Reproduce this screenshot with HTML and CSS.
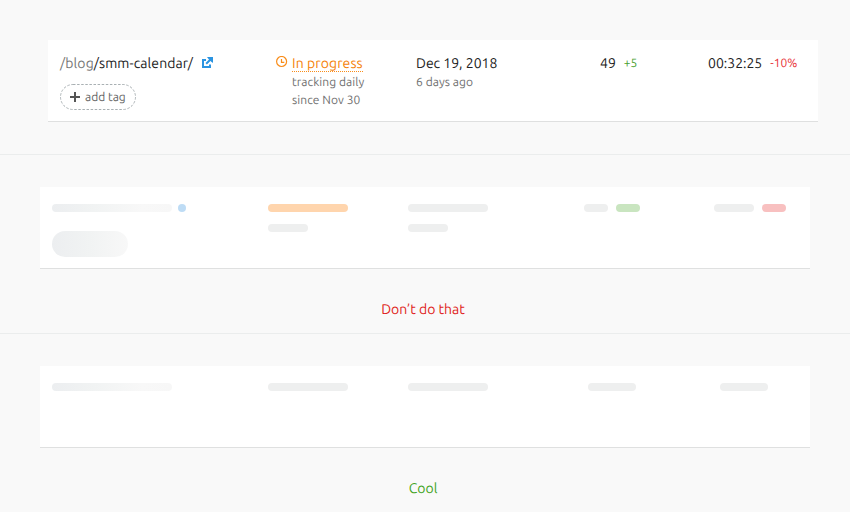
FILE: index.html
```html
<!DOCTYPE html>
<html lang="en">
<head>
<meta charset="utf-8">
<title>Row placeholders</title>
<link rel="stylesheet" href="styles.css">
</head>
<body>
<section class="example example-live">
  <div class="row">
    <div class="cell">
      <div class="line url"><span class="path"><span class="muted">/blog</span>/smm-calendar/</span>
        <svg class="external" width="11" height="11" viewBox="0 0 11 11" fill="none" stroke="#2b94e1" stroke-width="2"><path d="M4 3H1v7h7V7.5M4.2 6.8L9 2"/><path d="M5 0h6v6L9 4.5 6.5 2z" fill="#2b94e1" stroke="none"/></svg>
      </div>
      <div class="tag"><svg width="10" height="10" viewBox="0 0 10 10" stroke="#555" stroke-width="2"><path d="M0 5h10M5 0v10"/></svg><span class="tag-text">add tag</span>
        <svg class="tag-outline" width="76" height="26" viewBox="0 0 76 26" fill="none" stroke="#a9b0b3" stroke-dasharray="2.5 1.6"><rect x=".5" y=".5" width="75" height="25" rx="12.5"/></svg>
      </div>
    </div>
    <div class="cell status">
      <svg class="clock" width="12" height="12" viewBox="0 0 12 12" fill="none" stroke="#f98d1a" stroke-width="1.2"><circle cx="5.6" cy="5.5" r="5"/><path d="M5.5 3v3.4h2.8"/></svg>
      <div>
        <div class="line"><span class="progress">In progress</span></div>
        <div class="note">tracking daily</div>
        <div class="note">since Nov 30</div>
      </div>
    </div>
    <div class="cell"><div class="line">Dec 19, 2018</div><div class="note">6 days ago</div></div>
    <div class="cell line metric count"><span>49</span><span class="delta up">+5</span></div>
    <div class="cell line metric time"><span>00:32:25</span><span class="delta down">-10%</span></div>
  </div>
</section>
<section class="example">
  <div class="row skeleton">
    <div class="cell"><div class="bars gap-s"><i class="bar w120 fade"></i><i class="bar w8 blue"></i></div><i class="pill fade-pill"></i></div>
    <div class="cell stack"><i class="bar w80 orange"></i><i class="bar w40"></i></div>
    <div class="cell stack"><i class="bar w80"></i><i class="bar w40"></i></div>
    <div class="cell bars count-detailed"><i class="bar w24"></i><i class="bar w24 green"></i></div>
    <div class="cell bars time-detailed"><i class="bar w40"></i><i class="bar w24 red"></i></div>
  </div>
  <p class="caption bad">Don’t do that</p>
</section>
<section class="example">
  <div class="row skeleton">
    <div class="cell"><i class="bar w120 fade"></i></div>
    <div class="cell"><i class="bar w80"></i></div>
    <div class="cell"><i class="bar w80"></i></div>
    <div class="cell count-simple"><i class="bar w48"></i></div>
    <div class="cell time-simple"><i class="bar w48"></i></div>
  </div>
  <p class="caption good">Cool</p>
</section>
</body>
</html>
```
FILE: styles.css
```css
* { box-sizing: border-box; }
body {
  margin: 0;
  background: #f9f9f9;
  color: #222;
  font: 14px/20px Ubuntu, "Noto Sans", sans-serif;
  text-rendering: geometricPrecision;
}
.example { height: 179px; padding: 32px 40px 0; border-bottom: 1px solid #ebeded; }
.example:last-child { height: 178px; border-bottom: 0; }
.example-live { height: 155px; padding: 40px 32px 0 48px; }
.row {
  display: grid;
  grid-template-columns: 216px 140px 168px 120px 1fr;
  height: 82px;
  padding: 13px 12px 0;
  background: #fff;
  border-bottom: 1px solid #dfe0e0;
}
.example-live .row { width: 770px; }
.line { height: 20px; line-height: 20px; white-space: nowrap; }
.muted { color: #777; }
.url { display: flex; align-items: center; gap: 9px; }
.path { letter-spacing: .1px; }
.external { position: relative; top: -1px; }
.tag {
  position: relative;
  display: flex;
  align-items: center;
  gap: 5px;
  width: 76px;
  height: 26px;
  margin-top: 11px;
  padding-left: 10px;
  color: #666;
  font-size: 12px;
}
.tag-outline { position: absolute; inset: 0; }
.tag-text { padding-top: 2px; white-space: nowrap; }
.status { display: flex; gap: 4px; }
.clock { margin-top: 3px; }
.progress { position: relative; color: #f5820a; letter-spacing: .1px; }
.progress::after {
  content: "";
  position: absolute;
  left: 0;
  right: 0;
  bottom: -1px;
  border-bottom: 1px dotted #f98d1a;
}
.note { height: 18px; color: #707070; font-size: 12px; line-height: 20px; letter-spacing: .06px; white-space: nowrap; }
.metric { display: flex; gap: 8px; }
.delta { padding-top: 1px; font-size: 12px; }
.count { padding-left: 16px; }
.time { padding-left: 4px; }
.up { color: #48a030; }
.down { color: #e83034; }
.skeleton { padding-top: 17px; }
.bar { display: block; height: 8px; border-radius: 4px; background: #eeefef; }
.bars { display: flex; gap: 8px; }
.gap-s { gap: 6px; }
.stack { display: flex; flex-direction: column; gap: 12px; }
.w8 { width: 8px; }
.w24 { width: 24px; }
.w40 { width: 40px; }
.w48 { width: 48px; }
.w80 { width: 80px; }
.w120 { width: 120px; }
.fade { background: linear-gradient(90deg, #eceef0, #f1f3f3 35%, #f8f8f8 75%, #f7f7f7); }
.pill { display: block; width: 76px; height: 26px; margin-top: 19px; border-radius: 13px; }
.fade-pill { background: linear-gradient(90deg, #eceef0, #f1f3f3 50%, #f8f8f8); }
.blue { background: #bedcf5; }
.orange { background: #ffd5ad; }
.green { background: #c9e5c0; }
.red { background: #f8c0c0; }
.count-detailed { padding-left: 8px; }
.time-detailed { padding-left: 18px; }
.count-simple { padding-left: 12px; }
.time-simple { padding-left: 24px; }
.caption { margin: 0; padding: 30px 4px 0 0; text-align: center; }
.bad { color: #e01d20; }
.good { color: #3fa322; }
```
